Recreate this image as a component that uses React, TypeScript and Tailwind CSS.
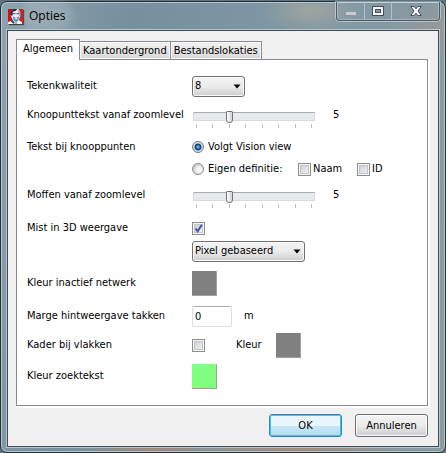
import { useState } from "react";
import type { ReactNode } from "react";

const tabs = ["Algemeen", "Kaartondergrond", "Bestandslokaties"];

const buttonFace =
  "border border-[#707070] bg-linear-to-b from-[#f3f3f3] from-0% via-[#ebebeb] via-50% to-[#cdcdcd] shadow-[inset_0_0_0_1px_#fafafa]";

function Row({
  label,
  htmlFor,
  className,
  children,
}: {
  label?: string;
  htmlFor?: string;
  className: string;
  children: ReactNode;
}) {
  return (
    <div className={`grid grid-cols-[165px_1fr] items-center ${className}`}>
      {label ? <label htmlFor={htmlFor}>{label}</label> : <span />}
      <div className="flex items-center">{children}</div>
    </div>
  );
}

function Select({
  id,
  options,
  className,
}: {
  id: string;
  options: string[];
  className: string;
}) {
  return (
    <div className={`relative h-[21px] ${className}`}>
      <select
        id={id}
        className={`h-full w-full appearance-none rounded-[3px] pl-[2px] pr-5 outline-none ${buttonFace}`}
      >
        {options.map((o) => (
          <option key={o}>{o}</option>
        ))}
      </select>
      <svg
        className="pointer-events-none absolute right-1 top-2 h-[5px] w-2"
        viewBox="0 0 8 5"
      >
        <path d="M0.5 0.5H7.5L4 4.5Z" fill="#000" />
      </svg>
    </div>
  );
}

function Slider({ id }: { id: string }) {
  const [value, setValue] = useState(5);

  return (
    <>
      <div className="mt-2 ml-px w-[122px]">
        <input
          id={id}
          type="range"
          min={3}
          max={10}
          value={value}
          onChange={(e) => setValue(Number(e.target.value))}
          className="block h-3 w-full appearance-none bg-transparent outline-none [&::-webkit-slider-runnable-track]:h-[9px] [&::-webkit-slider-runnable-track]:border [&::-webkit-slider-runnable-track]:border-[#d6dada] [&::-webkit-slider-runnable-track]:border-t-[#a9aeae] [&::-webkit-slider-runnable-track]:bg-[#e7eaea] [&::-webkit-slider-thumb]:-mt-[2px] [&::-webkit-slider-thumb]:h-3 [&::-webkit-slider-thumb]:w-[7px] [&::-webkit-slider-thumb]:appearance-none [&::-webkit-slider-thumb]:rounded-t-[1px] [&::-webkit-slider-thumb]:rounded-b-[3px] [&::-webkit-slider-thumb]:border [&::-webkit-slider-thumb]:border-[#6f7272] [&::-webkit-slider-thumb]:bg-linear-to-r [&::-webkit-slider-thumb]:from-white [&::-webkit-slider-thumb]:to-[#d4d4d4]"
        />
        <div className="mt-[2px] flex h-1 justify-between px-[3px]">
          {[3, 4, 5, 6, 7, 8, 9, 10].map((tick) => (
            <span key={tick} className="w-px bg-[#bfbfbf]" />
          ))}
        </div>
      </div>
      <output htmlFor={id} className="ml-[18px]">
        {value}
      </output>
    </>
  );
}

function Radio({ id, checked }: { id: string; checked?: boolean }) {
  return (
    <input
      id={id}
      type="radio"
      name="knooppunten"
      defaultChecked={checked}
      className="size-3 shrink-0 appearance-none rounded-full border border-[#8e8f8f] bg-[radial-gradient(circle_at_60%_60%,#fbfbfb_20%,#c3c6c9_75%)] checked:border-[#6c7b86] checked:bg-[radial-gradient(circle,#6fd0f5_0px,#1a6ea5_2px,#10385c_3px,#e6ebee_4px,#d0d5d8_5px)]"
    />
  );
}

function Checkbox({ id, checked }: { id: string; checked?: boolean }) {
  return (
    <span className="relative size-[13px] shrink-0">
      <input
        id={id}
        type="checkbox"
        defaultChecked={checked}
        className="peer block size-[13px] appearance-none border border-[#8e8f8f] bg-linear-135 from-[#c4c9d0] to-[#f8f8f8] shadow-[inset_0_0_0_1px_#f4f4f4,inset_0_0_0_2px_#c3c7cb]"
      />
      <svg
        className="pointer-events-none absolute inset-0 hidden peer-checked:block"
        viewBox="0 0 13 13"
      >
        <path
          d="M3.5 6.5L5.7 9.3L9.8 2.8"
          fill="none"
          stroke="#3f56a0"
          strokeWidth="2"
        />
      </svg>
    </span>
  );
}

function Swatch({ label, className }: { label: string; className: string }) {
  return (
    <button
      type="button"
      aria-label={label}
      className={`size-[25px] border-b border-r border-[#a0a0a0] ${className}`}
    />
  );
}

function AppIcon() {
  return (
    <svg className="size-[15px] shadow-[1px_1px_1px_#33414a]" viewBox="0 0 16 16">
      <rect width="16" height="16" fill="#d2100f" />
      <path d="M0 16V14L4 12L12 12L15 14V16Z" fill="#f7f7fa" />
      <path d="M4 2L7 0H11L13 3V8L11 13L8 15L5 12L3 7Z" fill="#f3ece8" />
      <path d="M3 7L3 3L6 0H10L8 2L5 3L5 7Z" fill="#1b2c55" />
      <path d="M10 1L13 3V7L12 8L11 4Z" fill="#8fb5e3" />
      <path d="M5 5H8M9 5H12" stroke="#273d75" strokeWidth="1" />
      <path d="M5 8L8 9L12 8L11 12L9 14L6 12Z" fill="#3f8ee0" />
      <path d="M7 9H10V11H8Z" fill="#eef6ff" />
      <path d="M4 11L7 14L6 16L3 13Z" fill="#1d3b7c" />
      <path d="M7 14L9 13L10 16H7Z" fill="#e7a530" />
    </svg>
  );
}

function TitleBar() {
  return (
    <header className="flex h-7 items-start justify-between pl-[7px] pr-[5px]">
      <div className="flex items-center gap-1 pt-1">
        <AppIcon />
        <h1 className="rounded-full bg-white/15 px-[2px] font-['Open_Sans','Noto_Sans',sans-serif] text-[12px] leading-5 shadow-[0_0_8px_6px_rgba(255,255,255,0.15)]">
          Opties
        </h1>
      </div>
      <div className="flex h-[19px] rounded-b-[4px] border border-t-0 border-[#4b5a64] text-white shadow-[0_0_0_1px_rgba(220,230,236,0.55),inset_0_0_0_1px_rgba(220,230,236,0.35)]">
        <button
          type="button"
          aria-label="Minimaliseren"
          className="flex w-7 items-center justify-center border-r border-[#b4c1c9]"
        >
          <svg className="h-3 w-3" viewBox="0 0 12 12">
            <rect x="0.5" y="6.5" width="11" height="4" fill="#c5ccd1" stroke="#8d99a2" />
          </svg>
        </button>
        <button
          type="button"
          aria-label="Maximaliseren"
          className="flex w-[27px] items-center justify-center border-r border-[#b4c1c9]"
        >
          <svg className="h-3 w-3" viewBox="0 0 12 12">
            <rect x="0.5" y="1.5" width="11" height="9" fill="#f7f7f7" stroke="#464d5c" />
            <rect x="3.5" y="4.5" width="5" height="3" fill="#8396a3" stroke="#464d5c" />
          </svg>
        </button>
        <button
          type="button"
          aria-label="Sluiten"
          className="flex w-[47px] items-center justify-center"
        >
          <svg className="h-3 w-3" viewBox="0 0 12 12">
            <path
              d="M0.8 1.5H4.2L6 3.8L7.8 1.5H11.2L8 6L11.2 10.5H7.8L6 8.2L4.2 10.5H0.8L4 6Z"
              fill="#fafafa"
              stroke="#464d5c"
            />
          </svg>
        </button>
      </div>
    </header>
  );
}

export default function App() {
  const [active, setActive] = useState(tabs[0]);

  return (
    <div className="flex min-h-screen flex-col bg-[#5b7480] pt-px font-['DejaVu_Sans_Condensed','DejaVu_Sans',sans-serif] text-[11px] leading-4 text-black">
      <div className="flex flex-1 flex-col rounded-[7px] border border-[#273238] bg-[radial-gradient(ellipse_60px_30px_at_100%_30px,#b5938166,transparent),radial-gradient(ellipse_50px_22px_at_310px_8px,#b9b09b88,transparent),radial-gradient(ellipse_70px_14px_at_150px_100%,#a58a7a,transparent),radial-gradient(ellipse_120px_14px_at_290px_100%,#a58a7a,transparent),linear-gradient(100deg,#8fa2ad,#76909d_25%,#8198a4_60%,#8a9ba3)] pb-[5px] shadow-[inset_0_0_0_1px_#b5c6cf]">
        <TitleBar />

        <main className="mx-[6px] flex flex-1 flex-col border border-[#3d4a52] bg-[#f0f0f0] px-2 pt-2 shadow-[0_0_0_1px_#b9c8d0]">
          <div role="tablist" className="flex items-end">
            {tabs.map((tab) => (
              <button
                key={tab}
                type="button"
                role="tab"
                aria-selected={tab === active}
                onClick={() => setActive(tab)}
                className={
                  tab === active
                    ? "relative z-10 -mb-px h-[21px] border border-b-0 border-[#898c95] bg-white px-[6px] pb-[2px]"
                    : "h-[18px] border border-b-0 border-l-0 border-[#898c95] bg-linear-to-b from-[#f2f2f2] to-[#d8d8d8] px-[3px] shadow-[inset_0_0_0_1px_#f7f7f7]"
                }
              >
                {tab}
              </button>
            ))}
          </div>

          <form className="mr-[2px] border border-[#898c95] bg-white px-[10px] pt-3 pb-[15px] shadow-[1px_1px_0_1px_#fff]">
            <Row label="Tekenkwaliteit" htmlFor="kwaliteit" className="h-7">
              <Select id="kwaliteit" options={["8", "4", "2"]} className="w-[53px]" />
            </Row>
            <Row label="Knoopunttekst vanaf zoomlevel" htmlFor="knoopzoom" className="mb-[6px] h-[30px]">
              <Slider id="knoopzoom" />
            </Row>
            <Row label="Tekst bij knooppunten" htmlFor="volgt" className="h-[22px]">
              <Radio id="volgt" checked />
              <label htmlFor="volgt" className="ml-1">
                Volgt Vision view
              </label>
            </Row>
            <Row className="h-[22px]">
              <div className="flex w-[106px] items-center gap-1">
                <Radio id="eigen" />
                <label htmlFor="eigen">Eigen definitie:</label>
              </div>
              <div className="flex w-[59px] items-center gap-[2px]">
                <Checkbox id="naam" />
                <label htmlFor="naam">Naam</label>
              </div>
              <div className="flex items-center gap-[2px]">
                <Checkbox id="id" />
                <label htmlFor="id">ID</label>
              </div>
            </Row>
            <Row label="Moffen vanaf zoomlevel" htmlFor="mofzoom" className="mb-[6px] h-[30px]">
              <Slider id="mofzoom" />
            </Row>
            <Row label="Mist in 3D weergave" htmlFor="mist" className="h-6">
              <Checkbox id="mist" checked />
            </Row>
            <Row className="h-[22px]">
              <Select
                id="mistsoort"
                options={["Pixel gebaseerd", "Vertex gebaseerd"]}
                className="w-[113px]"
              />
            </Row>
            <Row label="Kleur inactief netwerk" className="h-[42px]">
              <Swatch label="Kleur inactief netwerk" className="bg-[#808080]" />
            </Row>
            <Row label="Marge hintweergave takken" htmlFor="marge" className="h-6">
              <input
                id="marge"
                defaultValue="0"
                className="h-[21px] w-10 rounded-[2px] border border-[#dbdfe6] border-t-[#abadb3] bg-white pl-[2px] outline-none"
              />
              <span className="ml-3">m</span>
            </Row>
            <Row label="Kader bij vlakken" htmlFor="kader" className="h-[34px]">
              <Checkbox id="kader" />
              <span className="ml-[31px] w-10">Kleur</span>
              <Swatch label="Kleur" className="bg-[#808080]" />
            </Row>
            <Row label="Kleur zoektekst" className="h-7">
              <Swatch label="Kleur zoektekst" className="bg-[#80ff80]" />
            </Row>
          </form>

          <div className="mr-[2px] flex justify-end gap-[13px] py-2">
            <button
              type="button"
              className="h-[23px] w-[73px] rounded-[3px] border border-[#3c7fb1] bg-linear-to-b from-[#eaf6fd] from-50% via-[#c9e7f8] via-50% to-[#b0dcf3] shadow-[inset_0_0_0_1px_#2fcdf8]"
            >
              OK
            </button>
            <button
              type="button"
              className={`h-[23px] w-[73px] rounded-[3px] ${buttonFace}`}
            >
              Annuleren
            </button>
          </div>
        </main>
      </div>
    </div>
  );
}
